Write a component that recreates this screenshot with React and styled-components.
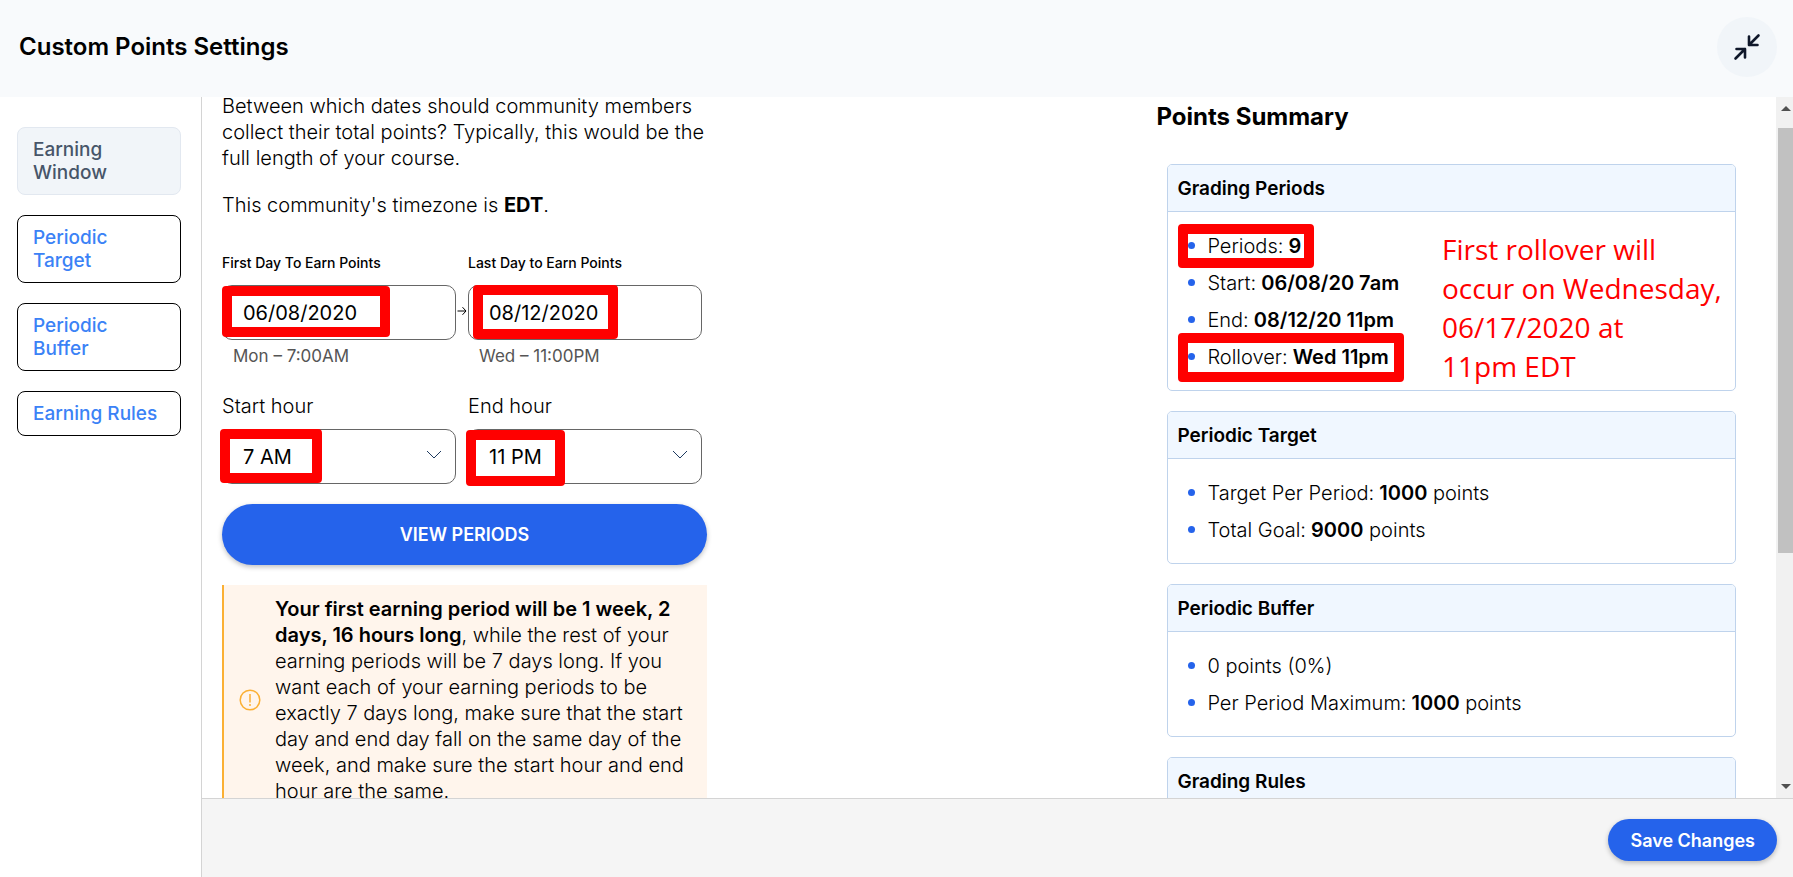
import React from 'react';
import styled, { createGlobalStyle, css } from 'styled-components';

const GlobalStyle = createGlobalStyle`
  *, *::before, *::after {
    box-sizing: border-box;
  }

  body {
    margin: 0;
    background-color: #ffffff;
    color: #000000;
    font-family: Inter, "Liberation Sans", sans-serif;
    font-size: 20px;
    font-weight: 300;
    line-height: 26px;
  }

  button, input, select {
    margin: 0;
    font-family: inherit;
  }
`;

const Page = styled.div`
  display: flex;
  flex-direction: column;
  height: 100vh;
`;

const Header = styled.header`
  display: flex;
  align-items: center;
  justify-content: space-between;
  flex: none;
  height: 97px;
  padding: 0 16px 4px 19px;
  background-color: #f8fafc;
`;

const Title = styled.h1`
  margin: 0;
  font-size: 24px;
  line-height: 32px;
  font-weight: 600;
`;

const IconButton = styled.button`
  display: flex;
  align-items: center;
  justify-content: center;
  width: 60px;
  height: 60px;
  padding: 0;
  border: 0;
  border-radius: 50%;
  background-color: #f1f5f9;
  color: #0f172a;
`;

const Body = styled.div`
  display: flex;
  flex: 1;
  min-height: 0;
`;

const Sidebar = styled.nav`
  display: flex;
  flex-direction: column;
  flex: none;
  gap: 20px;
  width: 202px;
  padding: 30px 20px 0 17px;
  border-right: 1px solid #d4d4d4;
`;

const Tab = styled.button`
  padding: 10px 15px;
  border: 1px solid ${props => (props.$active ? '#e2e8f0' : '#000000')};
  border-radius: 8px;
  background-color: ${props => (props.$active ? '#f1f5f9' : '#ffffff')};
  color: ${props => (props.$active ? '#475569' : '#3b82f6')};
  font-size: 19px;
  line-height: 23px;
  font-weight: 500;
  text-align: left;
`;

const Main = styled.main`
  display: flex;
  flex-direction: column;
  flex: 1;
  min-width: 0;
`;

const ScrollArea = styled.div`
  display: flex;
  flex: 1;
  min-height: 0;
  overflow: hidden;
`;

const Columns = styled.div`
  display: grid;
  grid-template-columns: 1fr 40%;
  flex: 1;
  align-items: start;
`;

const Form = styled.form`
  max-width: 525px;
  margin-top: -4px;
  padding: 0 20px;
`;

const Text = styled.p`
  margin: 0 0 21px;
`;

const Strong = styled.strong`
  font-weight: ${props => (props.$heavy ? 700 : 600)};
`;

const FieldRow = styled.div`
  display: grid;
  grid-template-columns: 1fr 12px 1fr;
  padding-right: 5px;
  margin-top: ${props => props.$top}px;
`;

const Field = styled.div`
  display: flex;
  flex-direction: column;
`;

const DateLabel = styled.label`
  margin-bottom: 12px;
  font-size: 14px;
  font-weight: 500;
  line-height: 20px;
`;

const HourLabel = styled.label`
  margin-bottom: 10px;
`;

const Control = styled.div`
  position: relative;
`;

const control = css`
  display: block;
  width: 100%;
  height: 55px;
  padding: 0 20px;
  border: 1px solid #666666;
  border-radius: 10px;
  background-color: #ffffff;
  color: #000000;
  font-size: 20px;
  font-weight: 400;
`;

const DateInput = styled.input`
  ${control}
`;

const HourSelect = styled.select`
  ${control}
  appearance: none;
`;

const Chevron = styled.svg`
  position: absolute;
  top: 21px;
  right: 14px;
  pointer-events: none;
`;

const Hint = styled.span`
  padding: 4px 11px 0;
  color: #555555;
  font-size: 17px;
  font-weight: 400;
  line-height: 24px;
`;

const ArrowCell = styled.div`
  display: flex;
  align-items: center;
  justify-content: center;
  height: 55px;
  margin-top: 30px;
`;

const pill = css`
  border: 0;
  border-radius: 31px;
  background-color: #2563eb;
  color: #ffffff;
  font-size: 18px;
  font-weight: 600;
  box-shadow: 0 2px 5px rgba(0, 0, 0, 0.25);
`;

const ViewButton = styled.button`
  ${pill}
  display: block;
  width: 100%;
  height: 61px;
  margin: 20px 0;
`;

const SaveButton = styled.button`
  ${pill}
  height: 42px;
  padding: 0 22px;
`;

const Notice = styled.div`
  display: flex;
  align-items: center;
  gap: 14px;
  padding: 11px 20px 13px 15px;
  border-left: 2px solid #fbb034;
  background-color: #fff5ec;
`;

const NoticeIcon = styled.svg`
  flex: none;
`;

const Summary = styled.aside`
  padding: 4px 40px 0 10px;
`;

const SummaryTitle = styled.h2`
  margin: 0 0 31px;
  font-size: 24px;
  line-height: 32px;
  font-weight: 700;
`;

const Cards = styled.div`
  display: flex;
  flex-direction: column;
  gap: 20px;
  padding-left: 11px;
`;

const Card = styled.section`
  position: relative;
  border: 1px solid #bfd3ec;
  border-radius: 5px;
  overflow: hidden;
`;

const CardTitle = styled.h3`
  margin: 0;
  padding: 11px 9px 9px;
  border-bottom: 1px solid #bfd3ec;
  background-color: #f0f7ff;
  font-size: 19px;
  font-weight: 600;
  line-height: 26px;
`;

const List = styled.ul`
  margin: 0;
  padding: 15px 20px;
  list-style: none;
`;

const Item = styled.li`
  position: relative;
  display: flex;
  align-items: center;
  gap: 12px;
  height: 37px;

  &::before {
    content: '';
    width: 7px;
    height: 7px;
    border-radius: 50%;
    background-color: #2563eb;
  }
`;

// red outline drawn over a value
const Marker = styled.span`
  position: absolute;
  top: ${props => props.$top}px;
  left: ${props => props.$left}px;
  width: ${props => props.$width}px;
  height: ${props => props.$height}px;
  border: 10px solid #ff0000;
  border-radius: 4px;
  pointer-events: none;
`;

const Note = styled.p`
  position: absolute;
  top: 65px;
  right: 8px;
  width: 285px;
  margin: 0;
  color: #ff0000;
  font-family: "Open Sans", "Noto Sans", sans-serif;
  font-size: 28px;
  font-weight: 400;
  line-height: 39px;
`;

const Scrollbar = styled.div`
  display: flex;
  flex-direction: column;
  align-items: flex-end;
  flex: none;
  width: 17px;
  background-color: #f1f1f1;
`;

const ScrollArrow = styled.svg`
  flex: none;
  margin: ${props => (props.$down ? '10px 2px 8px' : '8px 2px 15px')};
`;

const ScrollTrack = styled.div`
  flex: 1;
  width: 15px;
`;

const Thumb = styled.div`
  height: 66%;
  background-color: #c1c1c1;
`;

const Footer = styled.footer`
  display: flex;
  align-items: center;
  justify-content: flex-end;
  flex: none;
  height: 79px;
  padding: 4px 16px 0;
  border-top: 1px solid #d4d4d4;
  background-color: #f5f5f5;
`;

const tabs = ['Earning Window', 'Periodic Target', 'Periodic Buffer', 'Earning Rules'];

const SelectField = ({ id, label, value, marker }) => (
  <Field>
    <HourLabel htmlFor={id}>{label}</HourLabel>
    <Control>
      <HourSelect id={id} defaultValue={value}>
        <option>7 AM</option>
        <option>11 PM</option>
      </HourSelect>
      <Chevron width="16" height="10" viewBox="0 0 16 10" fill="none" stroke="#1e3a5f">
        <path d="M1 1l7 7 7-7" />
      </Chevron>
      {marker}
    </Control>
  </Field>
);

const SummaryCard = ({ title, items, children }) => (
  <Card>
    <CardTitle>{title}</CardTitle>
    <List>
      {items.map(item =>
        <Item key={item.label}>
          <span>{item.label}{item.value && <Strong> {item.value}</Strong>}{item.unit}</span>
          {item.marker}
        </Item>)}
    </List>
    {children}
  </Card>
);

const App = () => (
  <Page>
    <GlobalStyle />
    <Header>
      <Title>Custom Points Settings</Title>
      <IconButton aria-label="Minimize">
        <svg width="28" height="28" viewBox="0 0 28 28" fill="none" stroke="currentColor" strokeWidth="2.600" strokeLinecap="round" strokeLinejoin="round">
          <path d="M25.500 2.500L16 12M16 3.500V12h8.500M2.500 25.500L12 16M3.500 16H12v8.500" />
        </svg>
      </IconButton>
    </Header>
    <Body>
      <Sidebar>
        {tabs.map((tab, index) => <Tab key={tab} $active={index === 0}>{tab}</Tab>)}
      </Sidebar>
      <Main>
        <ScrollArea>
          <Columns>
            <Form onSubmit={event => event.preventDefault()}>
              <Text>
                Between which dates should community members collect their total
                points? Typically, this would be the full length of your course.
              </Text>
              <Text>This community's timezone is <Strong $heavy>EDT</Strong>.</Text>
              <FieldRow $top={35}>
                <Field>
                  <DateLabel htmlFor="first-day">First Day To Earn Points</DateLabel>
                  <Control>
                    <DateInput id="first-day" defaultValue="06/08/2020" />
                    <Marker $top={1} $left={0} $width={168} $height={51} />
                  </Control>
                  <Hint>Mon – 7:00AM</Hint>
                </Field>
                <ArrowCell>
                  <svg width="10" height="10" viewBox="0 0 10 10" fill="none" stroke="#000000">
                    <path d="M0.500 5h8.500M5.500 1.200L9 5 5.500 8.800" />
                  </svg>
                </ArrowCell>
                <Field>
                  <DateLabel htmlFor="last-day">Last Day to Earn Points</DateLabel>
                  <Control>
                    <DateInput id="last-day" defaultValue="08/12/2020" />
                    <Marker $top={0} $left={5} $width={145} $height={54} />
                  </Control>
                  <Hint>Wed – 11:00PM</Hint>
                </Field>
              </FieldRow>
              <FieldRow $top={25}>
                <SelectField
                  id="start-hour"
                  label="Start hour"
                  value="7 AM"
                  marker={<Marker $top={0} $left={-2} $width={102} $height={54} />}
                />
                <span />
                <SelectField
                  id="end-hour"
                  label="End hour"
                  value="11 PM"
                  marker={<Marker $top={1} $left={-2} $width={99} $height={56} />}
                />
              </FieldRow>
              <ViewButton type="button">VIEW PERIODS</ViewButton>
              <Notice>
                <NoticeIcon width="22" height="22" viewBox="0 0 22 22" fill="none" stroke="#fbb034">
                  <circle cx="11" cy="11" r="9.800" strokeWidth="1.500" />
                  <path d="M11 5v8.500M11 15v2" strokeWidth="1.500" />
                </NoticeIcon>
                <span>
                  <Strong>Your first earning period will be 1 week, 2 days, 16 hours long</Strong>,
                  while the rest of your earning periods will be 7 days long. If you want each of
                  your earning periods to be exactly 7 days long, make sure that the start day and
                  end day fall on the same day of the week, and make sure the start hour and end
                  hour are the same.
                </span>
              </Notice>
            </Form>
            <Summary>
              <SummaryTitle>Points Summary</SummaryTitle>
              <Cards>
                <SummaryCard
                  title="Grading Periods"
                  items={[
                    { label: 'Periods:', value: '9', marker: <Marker $top={-3} $left={-10} $width={136} $height={44} /> },
                    { label: 'Start:', value: '06/08/20 7am' },
                    { label: 'End:', value: '08/12/20 11pm' },
                    { label: 'Rollover:', value: 'Wed 11pm', marker: <Marker $top={-5} $left={-10} $width={226} $height={49} /> },
                  ]}
                >
                  <Note>First rollover will<br />occur on Wednesday,<br />06/17/2020 at<br />11pm EDT</Note>
                </SummaryCard>
                <SummaryCard
                  title="Periodic Target"
                  items={[
                    { label: 'Target Per Period:', value: '1000', unit: ' points' },
                    { label: 'Total Goal:', value: '9000', unit: ' points' },
                  ]}
                />
                <SummaryCard
                  title="Periodic Buffer"
                  items={[
                    { label: '0 points (0%)' },
                    { label: 'Per Period Maximum:', value: '1000', unit: ' points' },
                  ]}
                />
                <SummaryCard title="Grading Rules" items={[]} />
              </Cards>
            </Summary>
          </Columns>
          <Scrollbar>
            <ScrollArrow width="10" height="8" viewBox="0 0 10 8" fill="#505050">
              <path d="M5 1l5 5H0z" />
            </ScrollArrow>
            <ScrollTrack>
              <Thumb />
            </ScrollTrack>
            <ScrollArrow $down width="10" height="8" viewBox="0 0 10 8" fill="#505050">
              <path d="M5 7L0 2h10z" />
            </ScrollArrow>
          </Scrollbar>
        </ScrollArea>
        <Footer>
          <SaveButton>Save Changes</SaveButton>
        </Footer>
      </Main>
    </Body>
  </Page>
);

export default App;
